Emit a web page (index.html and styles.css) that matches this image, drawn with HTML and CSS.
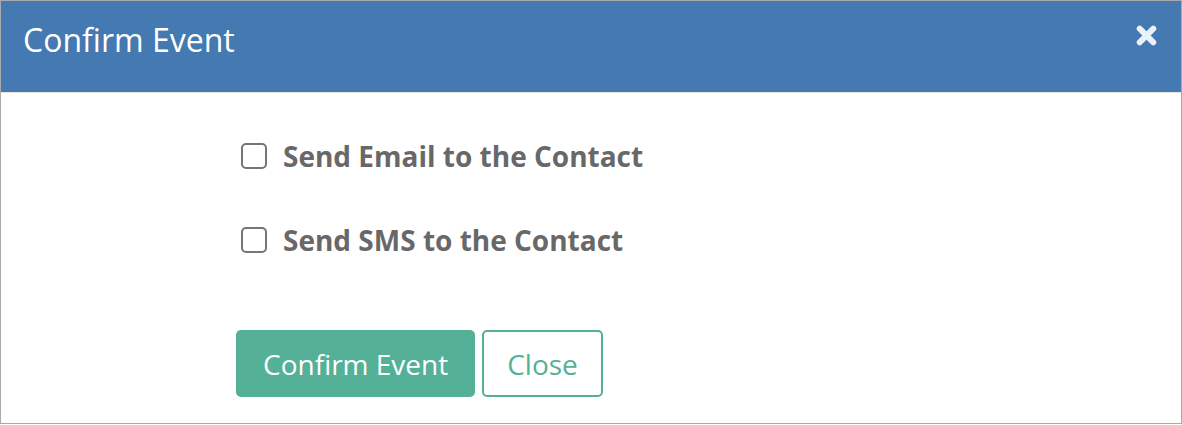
FILE: index.html
```html
<!DOCTYPE html>
<html lang="en">
<head>
<meta charset="utf-8">
<title>Confirm Event</title>
<link rel="stylesheet" href="styles.css">
</head>
<body>
<div class="modal">
  <div class="modal-header">
    <h4 class="modal-title">Confirm Event</h4>
    <button class="close-btn" type="button" aria-label="Close">
      <svg viewBox="0 0 20 20" width="21" height="21"><path d="M3.5 3.5 L16.5 16.5 M16.5 3.5 L3.5 16.5" stroke="currentColor" stroke-width="5.6" stroke-linecap="round"/></svg>
    </button>
  </div>
  <div class="modal-body">
    <label class="check-row"><span class="box"></span><span class="label-text">Send Email to the Contact</span></label>
    <label class="check-row"><span class="box"></span><span class="label-text">Send SMS to the Contact</span></label>
    <div class="actions">
      <button class="btn btn-primary" type="button">Confirm Event</button>
      <button class="btn btn-outline" type="button">Close</button>
    </div>
  </div>
</div>
</body>
</html>
```
FILE: styles.css
```css
html, body {
  margin: 0;
  padding: 0;
  background: #ffffff;
}
body {
  font-family: "Open Sans", "Liberation Sans", sans-serif;
}
.modal {
  box-sizing: border-box;
  width: 1182px;
  height: 424px;
  border: 1px solid #a9a9a9;
  background: #ffffff;
  display: flex;
  flex-direction: column;
}
.modal-header {
  height: 91px;
  background: #4479b1;
  border-bottom: 1px solid #e6e3de;
  display: flex;
  align-items: flex-start;
  justify-content: space-between;
  padding: 0 24px 0 22px;
}
.modal-title {
  margin: 0;
  padding-top: 18px;
  color: #ffffff;
  font-weight: 400;
  font-size: 32px;
  line-height: 42px;
}
.close-btn {
  background: none;
  border: 0;
  padding: 0;
  margin-top: 24px;
  color: #ecf1f8;
  display: flex;
}
.modal-body {
  padding: 43px 0 0 235px;
  display: flex;
  flex-direction: column;
}
.check-row {
  display: flex;
  align-items: center;
  height: 40px;
  margin-bottom: 44px;
}
.box {
  box-sizing: border-box;
  width: 26px;
  height: 26px;
  border: 2px solid #757575;
  border-radius: 5px;
  margin-left: 5px;
  margin-right: 16px;
  background: #ffffff;
}
.label-text {
  color: #686868;
  font-weight: 700;
  font-size: 28px;
}
.actions {
  display: flex;
  gap: 7px;
  margin-top: 26px;
}
.btn {
  box-sizing: border-box;
  height: 67px;
  border-radius: 5px;
  font-family: "Open Sans", "Liberation Sans", sans-serif;
  font-size: 28px;
  font-weight: 400;
  padding: 0 25px;
  border: 2px solid #54b096;
}
.btn-primary {
  background: #54b096;
  color: #ffffff;
}
.btn-outline {
  background: #ffffff;
  color: #54b096;
  padding: 0 23px;
}
```
